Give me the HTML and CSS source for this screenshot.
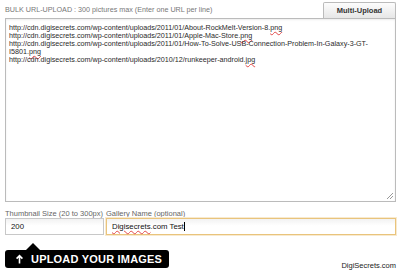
FILE: index.html
```html
<!DOCTYPE html>
<html lang="en">
<head>
  <meta charset="UTF-8" />
  <title>Bulk URL Upload</title>
  <link rel="stylesheet" href="styles.css">
</head>
<body>
  <div class="uploader">
    <div class="top">
      <span class="title">BULK URL-UPLOAD : 300 pictures max (Enter one URL per line)</span>
      <button class="multi" type="button">Multi-Upload</button>
    </div>

    <div class="urls"><span>http://cdn.digisecrets.com/wp-content/uploads/2011/01/About-RockMelt-Version-8.<u>png</u></span>
<span>http://cdn.digisecrets.com/wp-content/uploads/2011/01/Apple-Mac-Store.<u>png</u></span>
<span>http://cdn.digisecrets.com/wp-content/uploads/2011/01/How-To-Solve-USB-Connection-Problem-In-Galaxy-3-GT-</span>
<span>I5801.<u>png</u></span>
<span>http://cdn.digisecrets.com/wp-content/uploads/2010/12/runkeeper-android.<u>jpg</u></span></div>

    <div class="fields">
      <label class="field thumb">
        <span>Thumbnail Size (20 to 300px)</span>
        <div class="input">200</div>
      </label>
      <label class="field gallery">
        <span>Gallery Name (optional)</span>
        <div class="input focused"><u>Digisecrets</u>.com Test<i class="caret"></i></div>
      </label>
    </div>

    <div class="bottom">
      <button class="upload" type="button">
        <svg width="9" height="10" viewBox="0 0 9 10">
          <path d="M4.5 9.5V1.8M1.6 4.6L4.5 1.6L7.4 4.6" fill="none" stroke="#fff" stroke-width="1.6"/>
        </svg>
        UPLOAD YOUR IMAGES
      </button>
      <span class="brand">DigiSecrets.com</span>
    </div>
  </div>
</body>
</html>
```

FILE: styles.css
```css
* {
  box-sizing: border-box;
}
body {
  margin: 0;
  background: #fff;
  font-family: 'Liberation Sans', Arial, sans-serif;
  width: 401px;
  height: 277px;
  overflow: hidden;
}
.uploader {
  padding: 2px 5px 0 5px;
}
.top {
  display: flex;
  justify-content: space-between;
  align-items: flex-start;
  height: 16px;
}
.title {
  font-size: 7.2px;
  color: #777;
  margin-top: 3px;
}
.multi {
  width: 73px;
  height: 16px;
  padding: 0;
  font-family: 'Liberation Sans', Arial, sans-serif;
  font-size: 7.5px;
  font-weight: bold;
  color: #333;
  background: linear-gradient(#fdfdfd, #e6e6e6);
  border: 1px solid #bbb;
  border-bottom: none;
  border-radius: 2px 2px 0 0;
}
.urls {
  position: relative;
  width: 391px;
  height: 184px;
  padding: 5px 3px;
  font-size: 7.2px;
  line-height: 8.1px;
  color: #2a2a2a;
  white-space: pre-wrap;
  overflow-wrap: break-word;
  border: 1px solid #bbb;
  box-shadow: inset 0 1px 2px rgba(0,0,0,0.08);
}
.urls u,
.input u {
  text-decoration: underline wavy #e24a4a;
  text-decoration-thickness: 1px;
  text-underline-offset: 0.5px;
}
.urls::after {
  content: '';
  position: absolute;
  right: 2px;
  bottom: 2px;
  width: 6px;
  height: 6px;
  background: linear-gradient(135deg, transparent 45%, #999 45%, #999 55%, transparent 55%, transparent 70%, #999 70%, #999 80%, transparent 80%);
}
.fields {
  display: flex;
  gap: 2px;
  margin-top: 7px;
}
.field {
  display: flex;
  flex-direction: column;
}
.field span {
  font-size: 7.5px;
  color: #666;
  height: 9px;
  line-height: 9px;
}
.input {
  display: flex;
  align-items: center;
  height: 17px;
  padding: 0 5px;
  font-size: 7.8px;
  color: #111;
  border: 1px solid #c8c8c8;
  background: linear-gradient(#f2f2f2, #fff 45%);
}
.thumb .input {
  width: 99px;
}
.gallery {
  flex: 1;
}
.input.focused {
  border-color: #e9c47c;
  box-shadow: 0 0 0 1px #f8ead0;
}
.caret {
  display: inline-block;
  width: 1px;
  height: 9px;
  background: #000;
}
.bottom {
  display: flex;
  justify-content: space-between;
  align-items: flex-end;
  margin-top: 15px;
}
.upload {
  position: relative;
  height: 18px;
  padding: 0 7px 0 10px;
  display: flex;
  align-items: center;
  gap: 7px;
  background: #000;
  color: #fff;
  border: none;
  border-radius: 3px;
  font-family: 'Liberation Sans', Arial, sans-serif;
  font-size: 11px;
  font-weight: bold;
  letter-spacing: 0.2px;
}
.upload::before {
  content: '';
  position: absolute;
  left: 21px;
  top: -7px;
  border-left: 7px solid transparent;
  border-right: 7px solid transparent;
  border-bottom: 7px solid #000;
}
.brand {
  font-size: 7.5px;
  color: #222;
  margin-bottom: -2px;
}
```
